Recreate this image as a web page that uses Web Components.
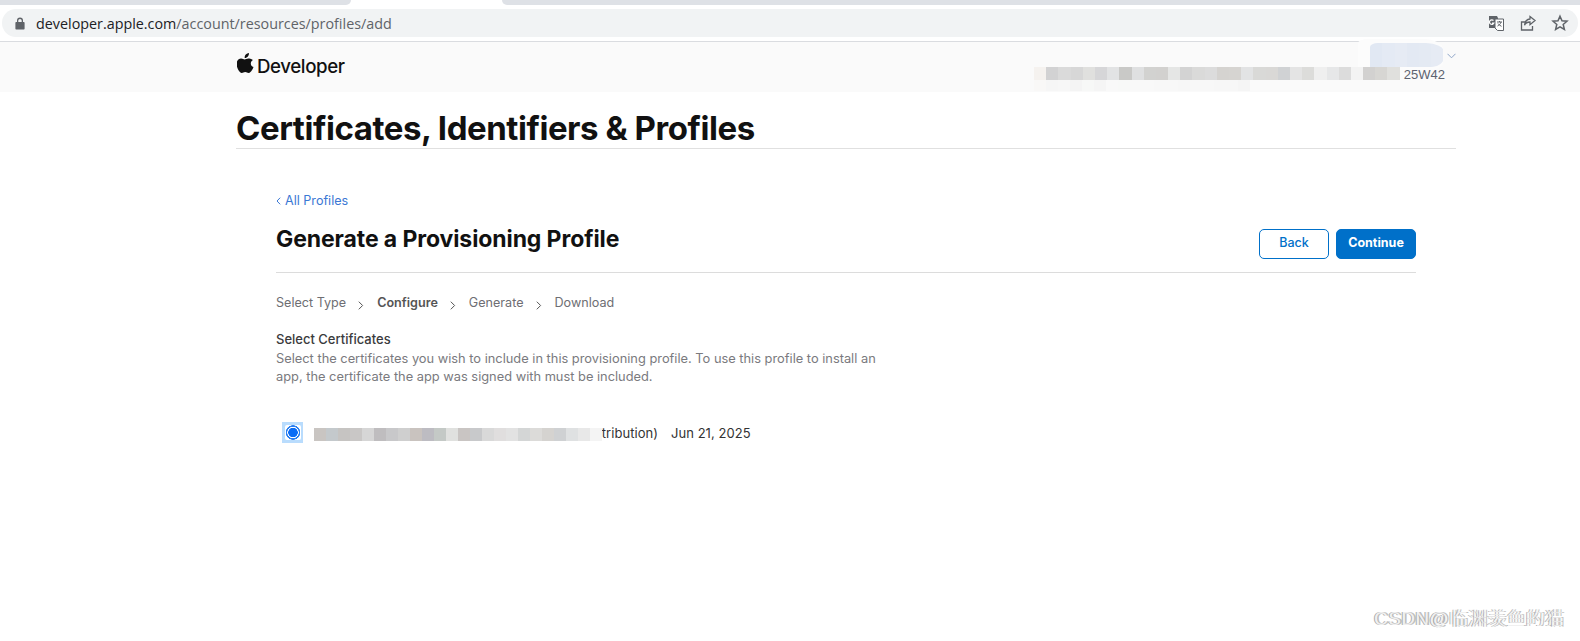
<!doctype html>
<html lang="en">
<head>
<meta charset="utf-8">
<title>Generate a Provisioning Profile</title>
<style>
  html, body { margin: 0; background: #fff; }
  body { width: 1580px; height: 641px; overflow: hidden; position: relative; font-family: Inter, "Liberation Sans", sans-serif; }
</style>
</head>
<body>
<browser-bar url-host="developer.apple.com" url-path="/account/resources/profiles/add"></browser-bar>
<dev-header></dev-header>
<page-title>Certificates, Identifiers &amp; Profiles</page-title>
<profile-panel>
  <a slot="back" href="#">All Profiles</a>
  <span slot="title">Generate a Provisioning Profile</span>
  <step-crumbs slot="steps" steps="Select Type,Configure,Generate,Download" current="1"></step-crumbs>
  <cert-picker slot="body"></cert-picker>
</profile-panel>
<water-mark>CSDN@临渊羡鱼的猫</water-mark>

<script>
// small helper: class with a fixed shadow template
function define(tag, html, setup) {
  const tpl = document.createElement('template');
  tpl.innerHTML = html;
  customElements.define(tag, class extends HTMLElement {
    constructor() {
      super();
      this.attachShadow({ mode: 'open' }).appendChild(tpl.content.cloneNode(true));
    }
    connectedCallback() { setup?.(this.shadowRoot, this); }
  });
}

define('browser-bar', `
<style>
  :host { display: block; height: 42px; box-sizing: border-box; border-bottom: 1px solid #dadce0; background: #fff; }
  .tabs { display: flex; height: 5px; }
  .tab-off { background: #dee1e6; }
  .a { width: 351px; border-bottom-right-radius: 8px; }
  .gap { width: 151px; }
  .b { flex: 1; border-bottom-left-radius: 8px; }
  .omni { display: flex; align-items: center; height: 28px; margin: 4px 2px 0; padding: 0 9px 0 13px; border-radius: 14px; background: #f1f3f4; font: 14.330px "Open Sans", "Liberation Sans", sans-serif; }
  .lock { width: 10px; height: 13px; margin-right: 11px; flex: none; }
  .url { color: #202124; flex: 1; }
  .url span { color: #5f6368; }
  .icons { display: flex; gap: 14px; align-items: center; }
  svg { display: block; }
</style>
<div class="tabs"><div class="tab-off a"></div><div class="gap"></div><div class="tab-off b"></div></div>
<div class="omni">
  <svg class="lock" viewBox="0 0 10 13"><path fill="#5f6368" d="M2 5V3.6a3 3 0 0 1 6 0V5h.6c.6 0 1 .4 1 1v5.6c0 .6-.4 1-1 1H1.400c-.6 0-1-.4-1-1V6c0-.6.4-1 1-1zm1.300 0h3.400V3.600a1.700 1.700 0 0 0-3.400 0z"/></svg>
  <div class="url"><b style="font-weight:400" id="h"></b><span id="p"></span></div>
  <div class="icons">
    <svg width="18" height="18" viewBox="0 0 18 18"><path fill="#5f6368" d="M2 2h8l1 2v10H2z"/><path fill="#fff" stroke="#5f6368" d="M8 5h8.500v11.500H10.500L8 14z"/><path fill="none" stroke="#fff" stroke-width="1.200" d="M6.500 6.500a2.300 2.300 0 1 0 .4 2.600H5"/><path fill="none" stroke="#5f6368" d="M10 8h5M12.500 7v1M14 8c-.4 2-2 3.500-3.500 4M11 9.500c.8 1.200 2 2.200 3.500 2.800"/></svg>
    <svg width="18" height="18" viewBox="0 0 18 18" fill="none" stroke="#5f6368" stroke-width="1.300"><path d="M6.500 8H2.500v8h11v-4"/><path d="M11 2.500 16 6.500l-5 4.200V8c-3 0-4.500 1-5.500 3.200C5.800 7.500 8 5.300 11 5z"/></svg>
    <svg width="18" height="18" viewBox="0 0 18 18" fill="none" stroke="#5f6368" stroke-width="1.500"><path d="M9 2.200l2 4.600 5 .4-3.800 3.300 1.200 4.900L9 12.800l-4.400 2.600 1.200-4.900L2 7.200l5-.4z"/></svg>
  </div>
</div>`, (root, el) => {
  root.getElementById('h').textContent = el.getAttribute('url-host');
  root.getElementById('p').textContent = el.getAttribute('url-path');
});

// pixelated redaction, cells come in as hex colours
define('mosaic-strip', `
<style>
  :host { display: flex; position: absolute; }
  i { display: block; height: 100%; flex: none; }
</style>`, (root, el) => {
  const w = el.getAttribute('cell') || 12;
  for (const c of el.getAttribute('cells').split(',')) {
    const cell = document.createElement('i');
    cell.style.width = w + 'px';
    cell.style.background = '#' + c;
    root.appendChild(cell);
  }
});

define('dev-header', `
<style>
  :host { display: block; height: 50px; background: #fafafa; position: relative; }
  .wrap { width: 1220px; height: 100%; margin-left: 236px; display: flex; align-items: center; justify-content: space-between; }
  .brand { display: flex; align-items: center; gap: 3px; margin-left: 1px; font: 500 18.700px Inter, "Liberation Sans", sans-serif; color: #111; letter-spacing: -0.4px; margin-top: -2px; }
  .brand svg { display: block; margin-top: -6px; }
  .acct { font: 13px "Liberation Sans", sans-serif; color: #5c6270; margin: 14px 11px 0 0; }
  .chev { position: absolute; left: 1447px; top: 11px; }
  .blob { position: absolute; left: 1358px; top: -3px; width: 85px; height: 31px; background: #fcfcfc; border-radius: 10px 20px 12px 0 / 4px 10px 8px 0; overflow: hidden; }
  .blob mosaic-strip { left: 12px; top: 4px; height: 24px; border-radius: 8px 18px 12px 0 / 4px 9px 10px 0; overflow: hidden; }
  .row1 { left: 1034px; top: 25px; height: 13px; }
  .fade { left: 1034px; top: 38px; height: 11px; }
</style>
<div class="wrap">
  <div class="brand">
    <svg width="17" height="20" viewBox="0 0 17 20"><path fill="#111" d="M12 0c.1 1.300-.4 2.500-1.100 3.400-.8.900-2 1.600-3.200 1.500C7.500 3.700 8.100 2.400 8.800 1.600 9.600.7 10.900.1 12 0zM15.900 6.900c-1.300.8-2.100 2-2.100 3.500 0 1.700 1 3 2.700 3.700-.4 1.200-.9 2.200-1.600 3.200-.9 1.300-1.900 2.600-3.300 2.600s-1.800-.8-3.400-.8c-1.600 0-2.100.8-3.400.8-1.400 0-2.400-1.300-3.300-2.600C.4 15.600-.4 13.200-.4 10.900c0-3.500 2.300-5.400 4.500-5.400 1.400 0 2.600.9 3.500.9.900 0 2.200-1 3.800-1 .7 0 3 .1 4.500 1.500z"/></svg>
    <span>Developer</span>
  </div>
  <div class="acct">25W42</div>
</div>
<svg class="chev" width="9" height="6" viewBox="0 0 9 6" fill="none" stroke="#8fa6c8"><path d="M.5.8 4.500 4.800 8.500.8"/></svg>
<div class="blob"><mosaic-strip cell="12.300" cells="e1e8f3,e4eaf4,e6ebf4,e3e9f3,e4eaf3,e6ebf4"></mosaic-strip></div>
<mosaic-strip class="row1" cell="12.200" cells="f5f2ef,d2d2d3,dadada,d7d7d7,e0e0de,d6d6d8,e2e3e4,c9c9c7,dfe0e1,d2d2d0,d2d1cf,e5e6e5,d3d3d3,dadad9,dcdcdc,d5d3d0,d6d4d1,e2e3e4,d9d9d7,d9d8d6,d0d2d4,e4e4e4,dcdcda,efefef,e6e7e8,dcdcdc,f3f3f3,d2d1d0,d7d6d3,e0e0dd"></mosaic-strip>
<mosaic-strip class="fade" cells="f9f8f7,f6f6f6,f7f7f7,f4f4f4,f7f8f7,f5f5f5,f9f9f9,f8f9f8,f9f9f9,f9f9f9,f8f8f8,f8f8f8,f7f7f7,f8f8f8,f8f8f8,f7f7f7,f7f7f7,f5f5f5"></mosaic-strip>`);

define('page-title', `
<style>
  :host { display: block; width: 1220px; margin-left: 236px; box-sizing: border-box; height: 57px; border-bottom: 1px solid #e0e0e0; padding-top: 16px; font: 700 33px/40px Inter, "Liberation Sans", sans-serif; color: #111; letter-spacing: -0.45px; white-space: nowrap; }
</style>
<slot></slot>`);

define('app-button', `
<style>
  :host { display: block; box-sizing: border-box; height: 30px; border-radius: 5px; border: 1px solid #0070c9; font: 500 12.500px/26px Inter, "Liberation Sans", sans-serif; text-align: center; color: #0070c9; background: #fff; }
  :host([primary]) { background: #0070c9; color: #fff; font-weight: 700; }
</style>
<slot></slot>`);

define('profile-panel', `
<style>
  :host { display: block; width: 1140px; margin-left: 276px; padding-top: 43px; }
  .back { display: flex; align-items: center; gap: 4px; height: 18px; font: 12.600px/18px Inter, "Liberation Sans", sans-serif; color: #3b78d4; }
  ::slotted(a) { color: inherit; text-decoration: none; }
  .top { display: flex; justify-content: space-between; height: 63px; box-sizing: border-box; border-bottom: 1px solid #dcdcdc; }
  h2 { margin: 13px 0 0; font: 700 23px/32px Inter, "Liberation Sans", sans-serif; color: #111; letter-spacing: -0.1px; white-space: nowrap; }
  .btns { display: flex; gap: 7px; margin-top: 19px; }
  .btns app-button:first-child { width: 70px; }
  .btns app-button:last-child { width: 80px; }
</style>
<div class="back"><svg width="5" height="8" viewBox="0 0 5 8" fill="none" stroke="#3b78d4"><path d="M4.200.7 1 4l3.200 3.300"/></svg><slot name="back"></slot></div>
<div class="top">
  <h2><slot name="title"></slot></h2>
  <div class="btns"><app-button>Back</app-button><app-button primary>Continue</app-button></div>
</div>
<slot name="steps"></slot>
<slot name="body"></slot>`);

define('step-crumbs', `
<style>
  :host { display: flex; align-items: center; height: 18px; margin-top: 21px; font: 12.600px/18px Inter, "Liberation Sans", sans-serif; color: #6e6e73; }
  b { font-weight: 600; color: #555; }
  svg { margin: 4px 13px 0 12px; display: block; }
</style>`, (root, el) => {
  const steps = el.getAttribute('steps').split(',');
  const current = +el.getAttribute('current');
  steps.forEach((s, i) => {
    const label = document.createElement(i === current ? 'b' : 'span');
    label.textContent = s;
    root.appendChild(label);
    if (i < steps.length - 1) {
      const holder = document.createElement('span');
      holder.innerHTML = '<svg width="6" height="9" viewBox="0 0 6 9" fill="none" stroke="#555"><path d="M.8.7 4.600 4.500.8 8.300"/></svg>';
      root.appendChild(holder.firstChild);
    }
  });
});

define('cert-picker', `
<style>
  :host { display: block; margin-top: 17px; font: 12.830px/18px Inter, "Liberation Sans", sans-serif; color: #7a7a7e; }
  h3 { margin: 0 0 1px; font: 500 13px/20px Inter, "Liberation Sans", sans-serif; color: #3a3a3c; }
  p { margin: 0; width: 610px; }
  .row { display: flex; align-items: center; margin: 36px 0 0 6px; height: 22px; position: relative; color: #333; white-space: nowrap; font-size: 13px; letter-spacing: 0.05px; }
  .hl { width: 21px; height: 21px; margin-bottom: 2px; background: #b9dcfd; display: flex; align-items: center; justify-content: center; }
  .hl input { appearance: none; margin: 0; width: 16px; height: 15px; border-radius: 2px; background: radial-gradient(circle at center, #0a6cf5 0 4.500px, #fff 5px 5.500px, #2a7ff0 6px 7px, #fff 7.500px); }
  .name { margin-left: 10px; width: 345px; text-align: right; }
  .date { margin-left: 13px; }
  mosaic-strip { left: 32px; top: 6px; height: 13px; }
</style>
<h3>Select Certificates</h3>
<p>Select the certificates you wish to include in this provisioning profile. To use this profile to install an app, the certificate the app was signed with must be included.</p>
<div class="row">
  <div class="hl"><input type="radio" checked></div>
  <span class="name">tribution)</span>
  <span class="date">Jun 21, 2025</span>
  <mosaic-strip cells="c9c5c2,c4c9cc,c6c4c2,c9c7c6,d6d6d6,bfbdbf,c8c8ca,cfcfcf,c9c3bf,bdbcc2,c4c9c6,e0e1df,c9c5c3,c8c9cb,d9d9d9,e0dede,e2e2e2,d4d6d6,dcdbd9,d5d3d0,cfd1d3,dfe1e2,e8e8e8,f4f4f4"></mosaic-strip>
</div>`);

define('water-mark', `
<style>
  :host { position: absolute; right: 16px; bottom: 11px; font: 300 18.500px "Liberation Sans", "Noto Sans CJK SC", sans-serif; letter-spacing: 0.7px; color: #f0f0f0; text-shadow: -1px 0 0 #aaa, 2px 0 0 #c0c0c0; white-space: nowrap; }
</style>
<slot></slot>`);
</script>
</body>
</html>
